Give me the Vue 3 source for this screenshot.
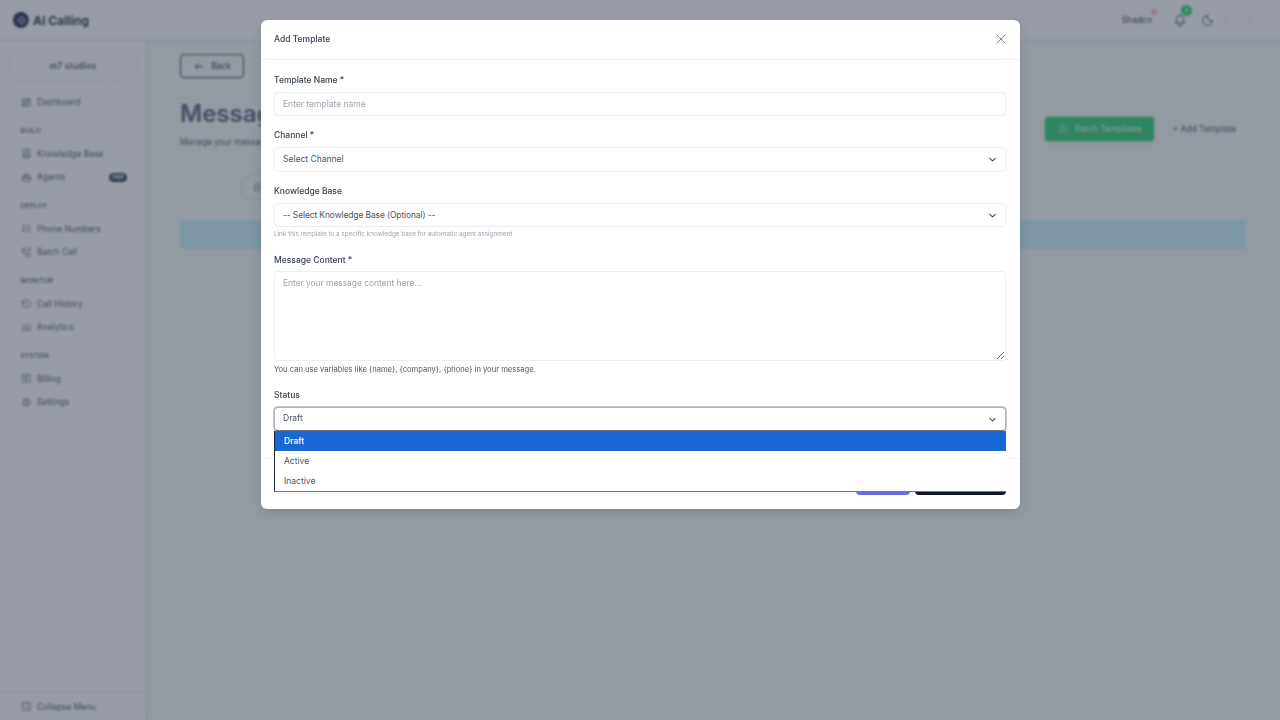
<script setup>
import { ref } from "vue";

const sections = [
  { items: [{ name: "Dashboard", icon: "grid" }] },
  { title: "BUILD", items: [{ name: "Knowledge Base", icon: "book" }, { name: "Agents", icon: "robot", badge: "Hot" }] },
  { title: "DEPLOY", items: [{ name: "Phone Numbers", icon: "list" }, { name: "Batch Call", icon: "phone" }] },
  { title: "MONITOR", items: [{ name: "Call History", icon: "history" }, { name: "Analytics", icon: "chart" }] },
  { title: "SYSTEM", items: [{ name: "Billing", icon: "bill" }, { name: "Settings", icon: "gear" }] },
];

const iconPaths = {
  grid: "M4 4h6v8H4zM14 4h6v4h-6zM4 16h6v4H4zM14 12h6v8h-6z",
  book: "M5 19V5a2 2 0 0 1 2-2h12v18H7a2 2 0 0 1-2-2zM5 17h14M12 7v6M9 10h6",
  robot: "M5 9h14a2 2 0 0 1 2 2v7a2 2 0 0 1-2 2H5a2 2 0 0 1-2-2v-7a2 2 0 0 1 2-2zM12 9V5M9 5h6M3 14h18M9 12v1M15 12v1",
  list: "M11 6h9M11 12h9M11 18h9M4 6l2-1v6M4 14h3l-3 4h3",
  phone: "M5 4h4l2 5-2.5 1.5a11 11 0 0 0 5 5L15 13l5 2v4a2 2 0 0 1-2 2A16 16 0 0 1 3 6a2 2 0 0 1 2-2zM15 3h5v5M15 8l5-5",
  history: "M12 8v4l2 2M3.05 11a9 9 0 1 1 .5 4M3 5v6h5",
  chart: "M4 19v-5M8 19v-8M12 19v-5M16 19v-7M20 19V9M4 10l4-4 4 3 6-6",
  bill: "M4 4h16v16H4zM10 8h4M10 12h4M10 16h2M10 8v8",
  gear: "M12 8a4 4 0 1 0 0 8 4 4 0 0 0 0-8zM10.3 4.3c.4-1.8 3-1.8 3.4 0a1.7 1.7 0 0 0 2.6 1c1.500-.9 3.300.9 2.400 2.400a1.700 1.700 0 0 0 1 2.600c1.800.4 1.800 3 0 3.400a1.700 1.700 0 0 0-1 2.600c.9 1.500-.9 3.300-2.400 2.400a1.700 1.700 0 0 0-2.600 1c-.4 1.800-3 1.800-3.400 0a1.700 1.700 0 0 0-2.600-1c-1.500.9-3.300-.9-2.400-2.400a1.700 1.700 0 0 0-1-2.600c-1.800-.4-1.800-3 0-3.400a1.700 1.700 0 0 0 1-2.600c-.9-1.500.9-3.300 2.400-2.400a1.700 1.700 0 0 0 2.600-1z",
};

const whatsapp = "M3 21l1.650-3.800A9 9 0 1 1 8 20.200L3 21zM9 10c0 3 2 5 5 5 .8 0 1.500-.5 1.500-1.300l-1.800-.9-.9.700c-.9-.4-1.600-1.100-2-2l.7-.9-.9-1.800C9.500 8.500 9 9.200 9 10z";

const statusOptions = ["Draft", "Active", "Inactive"];
const status = ref("Draft");
</script>

<template>
  <div class="page">
    <header class="topbar">
      <div class="brand">
        <span class="logo">
          <svg viewBox="0 0 24 24" width="11" height="11" fill="none" stroke="#fff" stroke-width="2" stroke-linecap="round">
            <path d="M12 3v5M12 16v5M3 12h5M16 12h5M6 6l3 3M15 15l3 3M18 6l-3 3M9 15l-3 3" />
          </svg>
        </span>
        <span class="brand-name">AI Calling</span>
      </div>
      <div class="top-right">
        <span class="user">Shadcn<i class="user-dot"></i></span>
        <span class="bell">
          <svg viewBox="0 0 24 24" width="14" height="14" fill="none" stroke="#4b5563" stroke-width="1.6" stroke-linecap="round" stroke-linejoin="round">
            <path d="M10 5a2 2 0 1 1 4 0 7 7 0 0 1 4 6v3a4 4 0 0 0 2 3H4a4 4 0 0 0 2-3v-3a7 7 0 0 1 4-6zM9 20a3 3 0 0 0 6 0" />
          </svg>
          <b class="bell-count">9</b>
        </span>
        <svg class="moon" viewBox="0 0 24 24" width="13" height="13" fill="none" stroke="#4b5563" stroke-width="1.700" stroke-linecap="round" stroke-linejoin="round">
          <path d="M12 3a9 9 0 1 0 9 9 7 7 0 0 1-9-9z" />
        </svg>
        <span class="top-divider"></span>
        <span class="lang">IPEx</span>
      </div>
    </header>

    <div class="shell">
      <aside class="sidebar">
        <div class="org">m7 studios</div>
        <nav class="nav">
          <div v-for="(section, i) in sections" :key="i" class="nav-section">
            <div v-if="section.title" class="nav-title">{{ section.title }}</div>
            <a v-for="item in section.items" :key="item.name" class="nav-item">
              <svg viewBox="0 0 24 24" width="11" height="11" fill="none" stroke="currentColor" stroke-width="1.700" stroke-linecap="round" stroke-linejoin="round">
                <path :d="iconPaths[item.icon]" />
              </svg>
              <span>{{ item.name }}</span>
              <em v-if="item.badge" class="nav-badge">{{ item.badge }}</em>
            </a>
          </div>
        </nav>
        <div class="collapse">
          <svg viewBox="0 0 24 24" width="11" height="11" fill="none" stroke="currentColor" stroke-width="1.800" stroke-linecap="round" stroke-linejoin="round">
            <path d="M4 4h16v16H4zM14 8l-4 4 4 4" />
          </svg>
          <span>Collapse Menu</span>
        </div>
      </aside>

      <main class="main">
        <button class="back" type="button">
          <svg viewBox="0 0 24 24" width="11" height="11" fill="none" stroke="currentColor" stroke-width="2" stroke-linecap="round" stroke-linejoin="round">
            <path d="M20 12H5M11 6l-6 6 6 6" />
          </svg>
          Back
        </button>
        <div class="page-head">
          <div class="page-title">
            <h1>Message Templates</h1>
            <p>Manage your message templates</p>
          </div>
          <div class="actions">
            <button class="fetch" type="button">
              <svg viewBox="0 0 24 24" width="10" height="10" fill="none" stroke="currentColor" stroke-width="1.800" stroke-linejoin="round"><path :d="whatsapp" /></svg>
              Fetch Templates
            </button>
            <button class="add" type="button">+ Add Template</button>
          </div>
        </div>
        <div class="tabs">
          <span class="tab">
            <svg viewBox="0 0 24 24" width="10" height="10" fill="none" stroke="currentColor" stroke-width="1.800" stroke-linejoin="round"><path :d="whatsapp" /></svg>
          </span>
        </div>
        <div class="notice"></div>
      </main>
    </div>

    <div class="overlay">
      <div class="modal">
        <div class="modal-head">
          <span>Add Template</span>
          <svg viewBox="0 0 24 24" width="14" height="14" fill="none" stroke="#6b7280" stroke-width="1.500" stroke-linecap="round">
            <path d="M5 5l14 14M19 5L5 19" />
          </svg>
        </div>

        <div class="modal-body">
          <label class="field name">
            <span class="label">Template Name *</span>
            <input class="control" type="text" placeholder="Enter template name" />
          </label>

          <div class="field">
            <span class="label">Channel *</span>
            <div class="control select">
              Select Channel
              <svg class="chev" viewBox="0 0 24 24" width="9" height="9" fill="none" stroke="#374151" stroke-width="2.800" stroke-linecap="round" stroke-linejoin="round"><path d="M5 9l7 7 7-7" /></svg>
            </div>
          </div>

          <div class="field kb">
            <span class="label">Knowledge Base</span>
            <div class="control select">
              -- Select Knowledge Base (Optional) --
              <svg class="chev" viewBox="0 0 24 24" width="9" height="9" fill="none" stroke="#374151" stroke-width="2.800" stroke-linecap="round" stroke-linejoin="round"><path d="M5 9l7 7 7-7" /></svg>
            </div>
            <small class="hint-small">Link this template to a specific knowledge base for automatic agent assignment</small>
          </div>

          <label class="field message">
            <span class="label">Message Content *</span>
            <textarea class="control area" placeholder="Enter your message content here..."></textarea>
            <small class="hint">You can use variables like {name}, {company}, {phone} in your message.</small>
          </label>

          <div class="field status">
            <span class="label">Status</span>
            <div class="status-wrap">
              <div class="control select focused">
                {{ status }}
                <svg class="chev" viewBox="0 0 24 24" width="9" height="9" fill="none" stroke="#374151" stroke-width="2.800" stroke-linecap="round" stroke-linejoin="round"><path d="M5 9l7 7 7-7" /></svg>
              </div>
              <ul class="dropdown">
                <li v-for="opt in statusOptions" :key="opt" :class="{ selected: opt === status }">{{ opt }}</li>
              </ul>
            </div>
          </div>
        </div>

        <div class="modal-foot">
          <button class="btn-purple" type="button">Save</button>
          <button class="btn-dark" type="button">Save Template</button>
        </div>
      </div>
    </div>
  </div>
</template>

<style>
html, body {
  margin: 0;
  background: #f7fbf8;
}
</style>

<style scoped>
.page {
  height: 720px;
  overflow: hidden;
  display: flex;
  flex-direction: column;
  font-family: Inter, "Liberation Sans", sans-serif;
  color: #1f2937;
  background: #f7fbf8;
}

.topbar {
  height: 41px;
  flex: none;
  box-sizing: border-box;
  border-bottom: 1px solid #e5e7eb;
  background: #fff;
  display: flex;
  align-items: center;
  justify-content: space-between;
  padding: 0 20px 0 13px;
}

.brand {
  display: flex;
  align-items: center;
  gap: 4px;
}

.logo {
  width: 16px;
  height: 16px;
  border-radius: 50%;
  background: #3a4660;
  display: flex;
  align-items: center;
  justify-content: center;
}

.brand-name {
  font-size: 12px;
  font-weight: 700;
  color: #4b5563;
}

.top-right {
  display: flex;
  align-items: center;
  font-size: 8.500px;
  color: #4b5563;
}

.user {
  position: relative;
  margin-right: 21px;
}

.user-dot {
  position: absolute;
  right: -5px;
  top: -6px;
  width: 6px;
  height: 6px;
  border-radius: 50%;
  background: #fecaca;
}

.bell {
  position: relative;
  display: flex;
  margin-right: 14px;
}

.bell-count {
  position: absolute;
  right: -5px;
  top: -8px;
  width: 11px;
  height: 11px;
  line-height: 11px;
  border-radius: 50%;
  background: #40d880;
  color: #fff;
  font-size: 6px;
  font-weight: 500;
  text-align: center;
}

.top-divider {
  width: 1px;
  height: 12px;
  background: #e5e7eb;
  margin: 0 14px 0 11px;
}

.lang {
  width: 20px;
  font-size: 7px;
  color: #e5e7eb;
  filter: blur(1px);
}

.shell {
  flex: 1;
  min-height: 0;
  display: flex;
}

.sidebar {
  width: 147px;
  flex: none;
  box-sizing: border-box;
  background: #fff;
  border-right: 1px solid #e5e7eb;
  display: flex;
  flex-direction: column;
  padding-top: 9.500px;
  color: #6b7280;
}

.org {
  margin: 0 9px;
  height: 30px;
  box-sizing: border-box;
  border: 1px dashed #eceef1;
  border-radius: 5px;
  display: flex;
  align-items: center;
  justify-content: center;
  font-size: 8.500px;
  font-weight: 600;
  letter-spacing: 0.2px;
}

.nav {
  flex: 1;
  padding: 10px 20px 0 20.500px;
}

.nav-section + .nav-section {
  margin-top: 10px;
}

.nav-title {
  height: 14px;
  line-height: 14px;
  font-size: 6.800px;
  font-weight: 400;
  margin-bottom: 4px;
  color: #4b5563;
}

.nav-item {
  height: 23.500px;
  display: flex;
  align-items: center;
  gap: 5.500px;
  font-size: 8.400px;
}

.nav-badge {
  margin-left: auto;
  margin-right: -1px;
  width: 18px;
  height: 9px;
  line-height: 9px;
  border-radius: 4.500px;
  background: #4a5568;
  color: #fff;
  font-size: 6.500px;
  font-style: normal;
  font-weight: 600;
  text-align: center;
}

.collapse {
  height: 28px;
  flex: none;
  box-sizing: border-box;
  border-top: 1px solid #eceef1;
  display: flex;
  align-items: center;
  gap: 5.500px;
  padding-left: 20.500px;
  font-size: 8.400px;
}

.main {
  flex: 1;
  min-width: 0;
  padding: 13px 34px 0 33px;
}

.back {
  width: 64px;
  height: 24px;
  border: 1px solid #4b5563;
  border-radius: 4px;
  background: transparent;
  color: #4b5563;
  font: inherit;
  font-size: 8.400px;
  display: flex;
  align-items: center;
  justify-content: center;
  gap: 7px;
  padding: 0;
}

.page-head {
  display: flex;
  align-items: flex-start;
  justify-content: space-between;
  margin-top: 22px;
}

.page-title {
  width: 81px;
  white-space: nowrap;
  overflow: hidden;
}

.page-head h1 {
  margin: 0;
  font-size: 24px;
  line-height: 28px;
  font-weight: 600;
  color: #6b7588;
}

.page-head p {
  margin: 9px 0 0;
  font-size: 8.400px;
  line-height: 11px;
  color: #6b7280;
}

.actions {
  display: flex;
  align-items: center;
  gap: 18px;
  margin: 17px 10px 0 0;
}

.fetch {
  width: 109px;
  height: 24px;
  border: none;
  border-radius: 3px;
  background: #40d880;
  color: #e5f9ed;
  font: inherit;
  font-size: 8.500px;
  display: flex;
  align-items: center;
  justify-content: center;
  gap: 7px;
  padding: 0;
  box-shadow: 0 1px 4px rgba(34, 197, 94, 0.35);
}

.add {
  border: none;
  background: none;
  padding: 0;
  font: inherit;
  font-size: 8.500px;
  color: #6b7280;
}

.tabs {
  margin-top: 25px;
  padding-left: 60px;
}

.tab {
  height: 27px;
  width: 90px;
  box-sizing: border-box;
  border: 1px solid #e5e7eb;
  border-radius: 14px;
  display: flex;
  align-items: center;
  padding-left: 12px;
  color: #6b7280;
}

.notice {
  height: 29px;
  margin-top: 20px;
  border-radius: 3px;
  background: #cff4fc;
}

.overlay {
  position: fixed;
  inset: 0;
  background: rgba(24, 35, 58, 0.45);
  backdrop-filter: blur(1px);
  display: flex;
  justify-content: center;
  align-items: flex-start;
}

.modal {
  width: 759px;
  height: 489px;
  margin: 20px 0 0 1px;
  box-sizing: border-box;
  background: #fff;
  border-radius: 6px;
  display: flex;
  flex-direction: column;
  box-shadow: 0 2px 8px rgba(0, 0, 0, 0.15);
}

.modal-head {
  height: 40px;
  flex: none;
  box-sizing: border-box;
  border-bottom: 1px solid #f0f1f3;
  padding: 0 12px 2px 13px;
  display: flex;
  align-items: center;
  justify-content: space-between;
  font-size: 8.500px;
  font-weight: 500;
  color: #374151;
}

.modal-body {
  flex: 1;
  min-height: 0;
  padding: 14px 14px 0 13px;
}

.field {
  display: block;
  margin-bottom: 13.500px;
}

.field.name {
  margin-bottom: 13px;
}

.field.name .label {
  margin-bottom: 5.500px;
}

.label {
  display: block;
  height: 12px;
  line-height: 12px;
  font-size: 8.500px;
  font-weight: 500;
  color: #374151;
  margin-bottom: 6px;
}

.control {
  display: block;
  width: 100%;
  height: 24.500px;
  box-sizing: border-box;
  border: 1px solid #eceef1;
  border-radius: 4px;
  padding: 0 8px;
  background: #fff;
  font-family: inherit;
  font-size: 8.500px;
  color: #4b5563;
  outline: none;
}

.control::placeholder {
  color: #9ca3af;
}

.select {
  position: relative;
  line-height: 22px;
}

.chev {
  position: absolute;
  right: 8px;
  top: 7px;
}

.field.kb {
  margin-bottom: 16px;
}

.field.kb .control {
  height: 24px;
  letter-spacing: -0.13px;
}

.hint-small {
  display: block;
  margin-top: 3px;
  height: 8px;
  line-height: 8px;
  font-size: 6.350px;
  color: #9ca3af;
}

.field.message .label {
  margin-bottom: 5px;
}

.area {
  height: 90px;
  padding-top: 6px;
  font-size: 8.400px;
  resize: vertical;
}

.hint {
  display: block;
  margin-top: 4px;
  height: 10px;
  line-height: 10px;
  font-size: 7.600px;
  color: #4b5563;
}

.field.message {
  margin-bottom: 14px;
}

.status-wrap {
  position: relative;
}

.select.focused {
  height: 24px;
  line-height: 21px;
  border-color: #b0b3b8;
  border-bottom-color: #6b7280;
  box-shadow: 0 0 0 1px #c4c6ca;
}

.dropdown {
  position: absolute;
  left: 0;
  right: 0;
  top: 24px;
  margin: 0;
  padding: 0;
  list-style: none;
  height: 61px;
  box-sizing: border-box;
  background: #fff;
  border-left: 1px solid #1f2937;
  border-bottom: 1px solid #777;
  z-index: 2;
  font-size: 8.500px;
  color: #4b5563;
}

.dropdown li {
  height: 20px;
  line-height: 20px;
  padding-left: 9px;
}

.dropdown li.selected {
  background: #1967d2;
  color: #fff;
  font-weight: 500;
}

.modal-foot {
  height: 51px;
  flex: none;
  box-sizing: border-box;
  border-top: 1px solid #f0f1f3;
  padding: 11px 14px 0 0;
  display: flex;
  justify-content: flex-end;
  gap: 5px;
}

.modal-foot button {
  height: 25px;
  border: none;
  border-radius: 4px;
  color: #fff;
  font: inherit;
  font-size: 8.500px;
}

.btn-purple {
  width: 54px;
  background: #6a6be6;
}

.btn-dark {
  width: 91px;
  background: #111827;
}
</style>
